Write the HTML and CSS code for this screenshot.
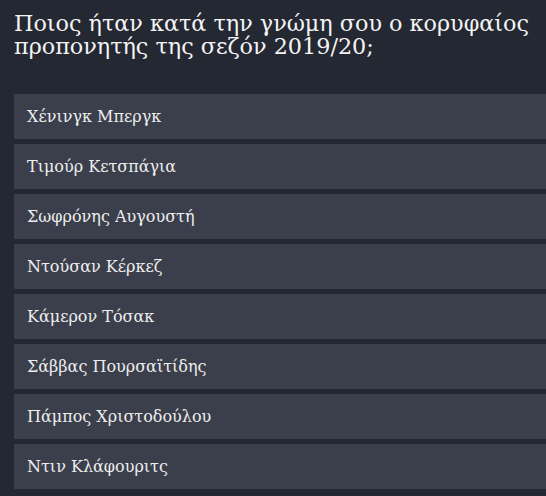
FILE: index.html
```html
<!DOCTYPE html>
<html lang="el">
<head>
<meta charset="utf-8">
<link rel="stylesheet" href="styles.css">
</head>
<body>
<div class="quiz">
  <h1 class="question">Ποιος ήταν κατά την γνώμη σου ο κορυφαίος προπονητής της σεζόν 2019/20;</h1>
  <ul class="answers">
    <li class="answer">Χένινγκ Μπεργκ</li>
    <li class="answer">Τιμούρ Κετσπάγια</li>
    <li class="answer">Σωφρόνης Αυγουστή</li>
    <li class="answer">Ντούσαν Κέρκεζ</li>
    <li class="answer">Κάμερον Τόσακ</li>
    <li class="answer">Σάββας Πουρσαϊτίδης</li>
    <li class="answer">Πάμπος Χριστοδούλου</li>
    <li class="answer">Ντιν Κλάφουριτς</li>
  </ul>
</div>
</body>
</html>
```
FILE: styles.css
```css
html, body {
  margin: 0;
  padding: 0;
  background: #242832;
  height: 100%;
  overflow: hidden;
}
.quiz {
  padding: 12px 0 0 14px;
  font-family: "DejaVu Serif", serif;
  color: #f4f4f4;
}
.question {
  margin: 0;
  font-size: 22.3px;
  font-weight: normal;
  line-height: 23px;
}
.answers {
  list-style: none;
  margin: 36px 0 0 0;
  padding: 0;
  display: flex;
  flex-direction: column;
  gap: 5px;
}
.answer {
  background: #3b3f4b;
  height: 45px;
  display: flex;
  align-items: center;
  padding-left: 13px;
  font-size: 16px;
  color: #eeeeee;
}
```
